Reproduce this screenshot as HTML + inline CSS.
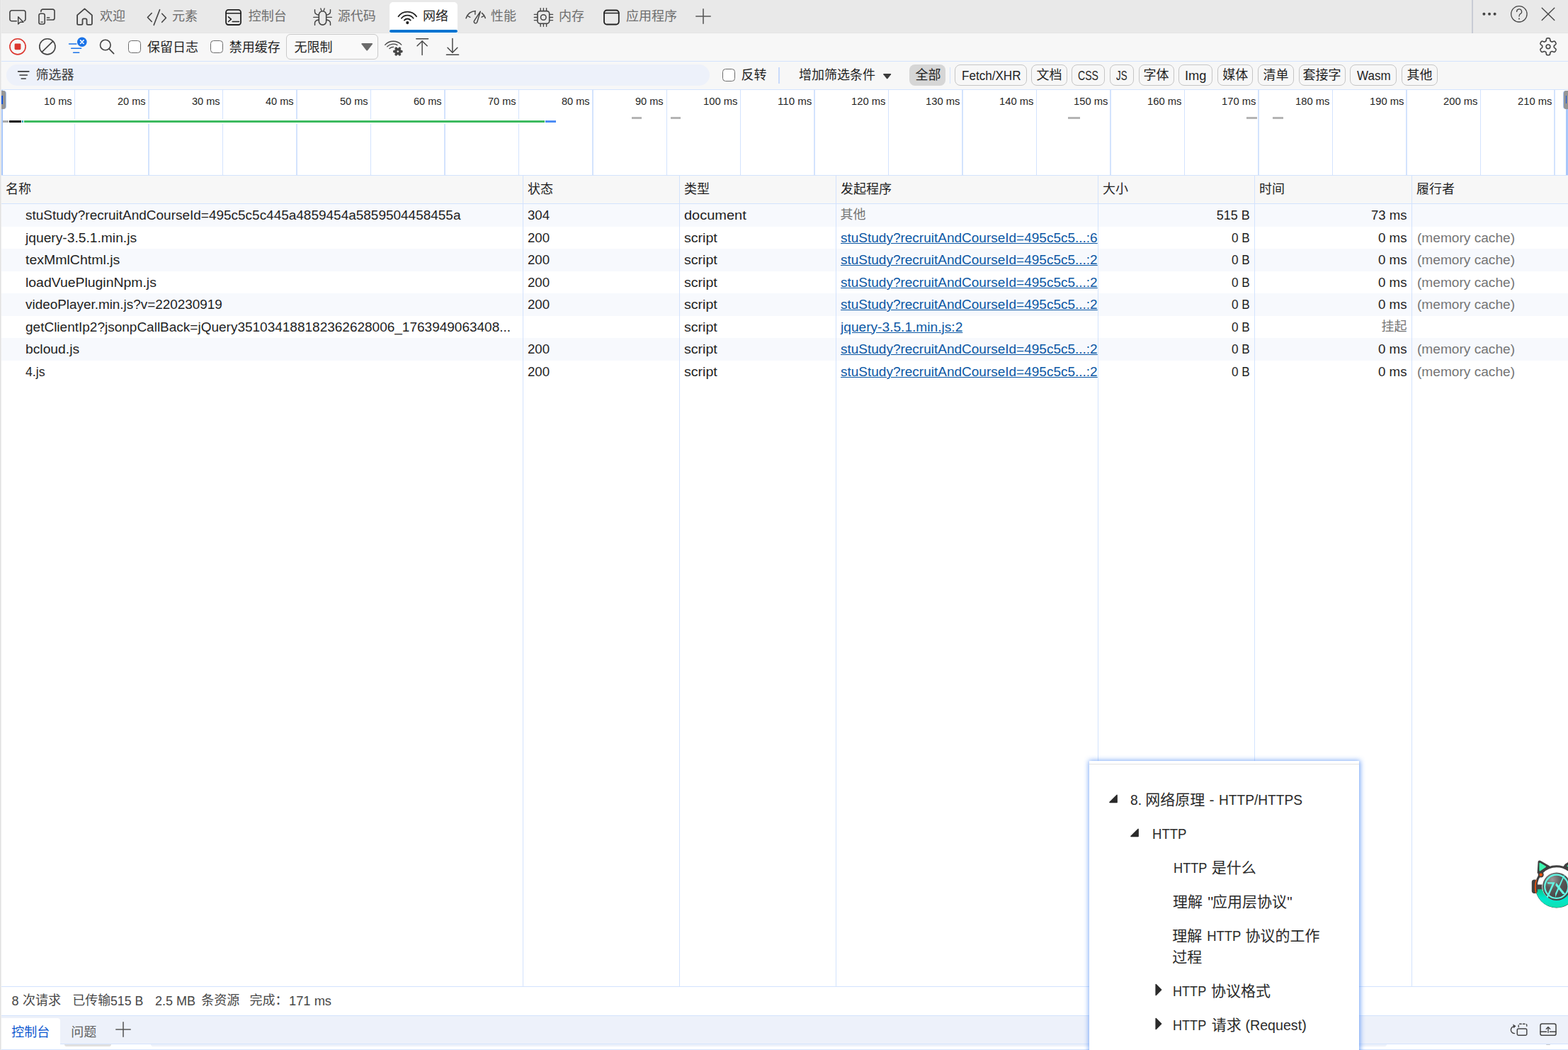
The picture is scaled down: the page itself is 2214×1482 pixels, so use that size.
<!DOCTYPE html>
<html lang="zh-CN"><head><meta charset="utf-8"><title>DevTools</title>
<style>
html,body{margin:0;padding:0;}
body{width:2214px;height:1482px;overflow:hidden;position:relative;background:#fff;font-family:"Liberation Sans","Noto Sans CJK SC",sans-serif;}
.t{position:absolute;white-space:pre;line-height:1;transform-origin:0 0;}
.g{position:absolute;overflow:visible;}
.h{position:absolute;white-space:nowrap;line-height:1;font-family:"Liberation Sans","Noto Sans CJK SC",sans-serif;}
.b{position:absolute;}
.i{position:absolute;overflow:visible;}

</style></head><body>
<div class="b" style="left:0px;top:0px;width:2214px;height:47px;background:#e9e9e9;"></div>
<div class="b" style="left:0px;top:46px;width:2214px;height:1px;background:#e5e5e5;"></div>
<div class="b" style="left:0px;top:47px;width:2214px;height:79px;background:#f7f7f7;"></div>
<div class="b" style="left:0px;top:86px;width:2214px;height:1px;background:#d3e3fd;"></div>
<div class="b" style="left:550px;top:3px;width:96px;height:44px;background:#ffffff;border-radius:5px 5px 0 0;"></div>
<div class="b" style="left:550px;top:42px;width:96px;height:4px;background:#0074d1;border-radius:2px;"></div>
<span class="h" style="left:141.00px;top:13.76px;width:36.00px;font-size:18.00px;color:#6e6e6e">欢迎</span>
<span class="h" style="left:243.00px;top:13.76px;width:36.00px;font-size:18.00px;color:#6e6e6e">元素</span>
<span class="h" style="left:350.80px;top:13.76px;width:54.00px;font-size:18.00px;color:#6e6e6e">控制台</span>
<span class="h" style="left:476.70px;top:13.76px;width:54.00px;font-size:18.00px;color:#6e6e6e">源代码</span>
<span class="h" style="left:597.00px;top:13.76px;width:36.00px;font-size:18.00px;color:#1f1f1f">网络</span>
<span class="h" style="left:693.00px;top:13.76px;width:36.00px;font-size:18.00px;color:#6e6e6e">性能</span>
<span class="h" style="left:789.00px;top:13.76px;width:36.00px;font-size:18.00px;color:#6e6e6e">内存</span>
<span class="h" style="left:884.00px;top:13.76px;width:72.00px;font-size:18.00px;color:#6e6e6e">应用程序</span>
<svg class="i" style="left:10px;top:10px;width:30px;height:28px;color:#444;" viewBox="10 10 30 28"><path d="M23.4,29.8 H16.7 A2.8,2.8 0 0 1 13.9,27 V17.6 A2.8,2.8 0 0 1 16.7,14.8 H33.2 A2.8,2.8 0 0 1 36,17.6 V27 A2.8,2.8 0 0 1 34.2,29.6" fill="none" stroke="currentColor" stroke-linecap="round" stroke-linejoin="round" stroke-width="1.62" /><path d="M25.7,23.8 V34 L28.6,31.3 L33,31.2 Z" fill="none" stroke="currentColor" stroke-linecap="round" stroke-linejoin="round" stroke-width="1.44" /></svg>
<svg class="i" style="left:50px;top:8px;width:32px;height:30px;color:#444;" viewBox="50 8 32 30"><path d="M57.9,16.6 V15.7 A2.6,2.6 0 0 1 60.5,13.1 H74.4 A2.6,2.6 0 0 1 77,15.7 V25.4 A2.6,2.6 0 0 1 74.4,28 H66.4" fill="none" stroke="currentColor" stroke-linecap="round" stroke-linejoin="round" stroke-width="1.62" /><path d="M57.2,19.2 H61 A2.2,2.2 0 0 1 63.2,21.4 V31.8 A2.2,2.2 0 0 1 61,34 H57.2 A2.2,2.2 0 0 1 55,31.8 V21.4 A2.2,2.2 0 0 1 57.2,19.2 Z" fill="none" stroke="currentColor" stroke-linecap="round" stroke-linejoin="round" stroke-width="1.62" /><path d="M57.8,31.1 H60.4" fill="none" stroke="currentColor" stroke-linecap="round" stroke-linejoin="round" stroke-width="1.35" /><path d="M66.4,25 H69.8" fill="none" stroke="currentColor" stroke-linecap="round" stroke-linejoin="round" stroke-width="1.35" /></svg>
<svg class="i" style="left:104px;top:8px;width:32px;height:30px;color:#444;" viewBox="104 8 32 30"><path d="M119.5,12.4 L109.1,21.4 V33.2 A1.6,1.6 0 0 0 110.7,34.8 H114.9 A1.6,1.6 0 0 0 116.5,33.2 V28 A1.6,1.6 0 0 1 118.1,26.4 H120.9 A1.6,1.6 0 0 1 122.5,28 V33.2 A1.6,1.6 0 0 0 124.1,34.8 H128.3 A1.6,1.6 0 0 0 129.9,33.2 V21.4 Z" fill="none" stroke="currentColor" stroke-linecap="round" stroke-linejoin="round" stroke-width="1.8" /></svg>
<svg class="i" style="left:204px;top:10px;width:36px;height:28px;color:#444;" viewBox="204 10 36 28"><path d="M214.2,18.5 L208.4,24.5 L214.2,30.5" fill="none" stroke="currentColor" stroke-linecap="round" stroke-linejoin="round" stroke-width="1.62" /><path d="M225.6,13.6 L217.2,35.4" fill="none" stroke="currentColor" stroke-linecap="round" stroke-linejoin="round" stroke-width="1.53" /><path d="M228.7,19.3 L234.4,25.2 L228.7,31.3" fill="none" stroke="currentColor" stroke-linecap="round" stroke-linejoin="round" stroke-width="1.62" /></svg>
<svg class="i" style="left:314px;top:9px;width:32px;height:30px;color:#222;" viewBox="314 9 32 30"><path d="M322.5,13.9 H336.6 A3.4,3.4 0 0 1 340,17.3 V31.6 A3.4,3.4 0 0 1 336.6,35 H322.5 A3.4,3.4 0 0 1 319.1,31.6 V17.3 A3.4,3.4 0 0 1 322.5,13.9 Z" fill="none" stroke="currentColor" stroke-linecap="round" stroke-linejoin="round" stroke-width="1.8" /><path d="M319.1,18.7 H340" fill="none" stroke="currentColor" stroke-linecap="round" stroke-linejoin="round" stroke-width="1.62" /><path d="M322.5,23.8 L326.4,27.1 L322.5,30.5" fill="none" stroke="currentColor" stroke-linecap="round" stroke-linejoin="round" stroke-width="1.53" /><path d="M328.2,30.5 H337.4" fill="none" stroke="currentColor" stroke-linecap="round" stroke-linejoin="round" stroke-width="1.53" /></svg>
<svg class="i" style="left:438px;top:8px;width:36px;height:32px;color:#444;" viewBox="438 8 36 32"><path d="M455.5,15.7 H455.5 A5.2,5.2 0 0 1 460.7,20.9 V29.9 A5.2,5.2 0 0 1 455.5,35.1 H455.5 A5.2,5.2 0 0 1 450.3,29.9 V20.9 A5.2,5.2 0 0 1 455.5,15.7 Z" fill="none" stroke="currentColor" stroke-linecap="round" stroke-linejoin="round" stroke-width="1.62" /><path d="M452.9,12 L454.1,15.6" fill="none" stroke="currentColor" stroke-linecap="round" stroke-linejoin="round" stroke-width="1.35" /><path d="M458.1,12 L456.9,15.6" fill="none" stroke="currentColor" stroke-linecap="round" stroke-linejoin="round" stroke-width="1.35" /><path d="M442.8,24.4 H450.3" fill="none" stroke="currentColor" stroke-linecap="round" stroke-linejoin="round" stroke-width="1.44" /><path d="M460.7,24.4 H468.2" fill="none" stroke="currentColor" stroke-linecap="round" stroke-linejoin="round" stroke-width="1.44" /><path d="M444.5,13.6 V16.4 Q444.6,20.3 450.2,21" fill="none" stroke="currentColor" stroke-linecap="round" stroke-linejoin="round" stroke-width="1.44" /><path d="M466.5,13.6 V16.4 Q466.4,20.3 460.8,21" fill="none" stroke="currentColor" stroke-linecap="round" stroke-linejoin="round" stroke-width="1.44" /><path d="M444.5,35.4 V32.6 Q444.6,28.7 450.2,28" fill="none" stroke="currentColor" stroke-linecap="round" stroke-linejoin="round" stroke-width="1.44" /><path d="M466.5,35.4 V32.6 Q466.4,28.7 460.8,28" fill="none" stroke="currentColor" stroke-linecap="round" stroke-linejoin="round" stroke-width="1.44" /></svg>
<svg class="i" style="left:558px;top:10px;width:36px;height:28px;color:#222;" viewBox="558 10 36 28"><circle cx="575.3" cy="32.1" r="2.1" fill="currentColor"/><path d="M562.52,23.35 A15.6,15.6 0 0 1 588.08,23.35" fill="none" stroke="currentColor" stroke-linecap="round" stroke-linejoin="round" stroke-width="1.8" /><path d="M566.95,25.77 A10.6,10.6 0 0 1 583.65,25.77" fill="none" stroke="currentColor" stroke-linecap="round" stroke-linejoin="round" stroke-width="1.8" /><path d="M570.86,28.57 A5.8,5.8 0 0 1 579.74,28.57" fill="none" stroke="currentColor" stroke-linecap="round" stroke-linejoin="round" stroke-width="1.8" /></svg>
<svg class="i" style="left:652px;top:10px;width:38px;height:28px;color:#444;" viewBox="652 10 38 28"><path d="M658.05,25.69 A14.2,14.2 0 0 1 671.20,15.41" fill="none" stroke="currentColor" stroke-linecap="round" stroke-linejoin="round" stroke-width="1.53" /><path d="M680.44,18.41 A14.2,14.2 0 0 1 685.28,25.45" fill="none" stroke="currentColor" stroke-linecap="round" stroke-linejoin="round" stroke-width="1.53" /><path d="M660.8,22.6 L663.8,24.4" fill="none" stroke="currentColor" stroke-linecap="round" stroke-linejoin="round" stroke-width="1.35" /><path d="M670.9,15.8 V20.3" fill="none" stroke="currentColor" stroke-linecap="round" stroke-linejoin="round" stroke-width="1.35" /><path d="M680,24.2 L683,22.6" fill="none" stroke="currentColor" stroke-linecap="round" stroke-linejoin="round" stroke-width="1.35" /><path d="M678.3,16.2 L669.6,29.3 A2.3,2.3 0 1 0 673.7,31.3 Z" fill="none" stroke="currentColor" stroke-linecap="round" stroke-linejoin="round" stroke-width="1.44" /></svg>
<svg class="i" style="left:750px;top:8px;width:36px;height:32px;color:#444;" viewBox="750 8 36 32"><path d="M762.6,15.6 H772.1 A3.6,3.6 0 0 1 775.7,19.2 V29.7 A3.6,3.6 0 0 1 772.1,33.3 H762.6 A3.6,3.6 0 0 1 759,29.7 V19.2 A3.6,3.6 0 0 1 762.6,15.6 Z" fill="none" stroke="currentColor" stroke-linecap="round" stroke-linejoin="round" stroke-width="1.62" /><circle cx="767.3" cy="24.5" r="3.8" fill="none" stroke="currentColor" stroke-linecap="round" stroke-linejoin="round" stroke-width="1.53"/><path d="M763.2,11.6 V14.8" fill="none" stroke="currentColor" stroke-linecap="round" stroke-linejoin="round" stroke-width="1.35" /><path d="M763.2,34.2 V37.3" fill="none" stroke="currentColor" stroke-linecap="round" stroke-linejoin="round" stroke-width="1.35" /><path d="M767.4,11.6 V14.8" fill="none" stroke="currentColor" stroke-linecap="round" stroke-linejoin="round" stroke-width="1.35" /><path d="M767.4,34.2 V37.3" fill="none" stroke="currentColor" stroke-linecap="round" stroke-linejoin="round" stroke-width="1.35" /><path d="M771.6,11.6 V14.8" fill="none" stroke="currentColor" stroke-linecap="round" stroke-linejoin="round" stroke-width="1.35" /><path d="M771.6,34.2 V37.3" fill="none" stroke="currentColor" stroke-linecap="round" stroke-linejoin="round" stroke-width="1.35" /><path d="M754.3,20.4 H758" fill="none" stroke="currentColor" stroke-linecap="round" stroke-linejoin="round" stroke-width="1.35" /><path d="M776.6,20.4 H780.6" fill="none" stroke="currentColor" stroke-linecap="round" stroke-linejoin="round" stroke-width="1.35" /><path d="M754.3,24.5 H758" fill="none" stroke="currentColor" stroke-linecap="round" stroke-linejoin="round" stroke-width="1.35" /><path d="M776.6,24.5 H780.6" fill="none" stroke="currentColor" stroke-linecap="round" stroke-linejoin="round" stroke-width="1.35" /><path d="M754.3,28.6 H758" fill="none" stroke="currentColor" stroke-linecap="round" stroke-linejoin="round" stroke-width="1.35" /><path d="M776.6,28.6 H780.6" fill="none" stroke="currentColor" stroke-linecap="round" stroke-linejoin="round" stroke-width="1.35" /></svg>
<svg class="i" style="left:848px;top:9px;width:32px;height:30px;color:#222;" viewBox="848 9 32 30"><path d="M856.8,14.5 H870 A3.8,3.8 0 0 1 873.8,18.3 V30.7 A3.8,3.8 0 0 1 870,34.5 H856.8 A3.8,3.8 0 0 1 853,30.7 V18.3 A3.8,3.8 0 0 1 856.8,14.5 Z" fill="none" stroke="currentColor" stroke-linecap="round" stroke-linejoin="round" stroke-width="1.8" /><path d="M853,18.5 H873.8" fill="none" stroke="currentColor" stroke-linecap="round" stroke-linejoin="round" stroke-width="1.62" /></svg>
<svg class="i" style="left:981px;top:10.9px;width:24px;height:24px;color:#555;" viewBox="-12 -12 24 24"><path d="M-10.2,0 H10.2 M0,-10.2 V10.2" fill="none" stroke="currentColor" stroke-linecap="round" stroke-linejoin="round" stroke-width="1.53" stroke-linecap="butt"/></svg>
<div class="b" style="left:2078.2px;top:0px;width:1.8px;height:46.8px;background:#c8ccd5;"></div>
<svg class="i" style="left:2090px;top:14px;width:26px;height:12px;color:#444;" viewBox="2090 14 26 12"><circle cx="2095.4" cy="19.8" r="2" fill="currentColor"/><circle cx="2103" cy="19.8" r="2" fill="currentColor"/><circle cx="2110.6" cy="19.8" r="2" fill="currentColor"/></svg>
<svg class="i" style="left:2130px;top:5px;width:30px;height:30px;color:#444;" viewBox="2130 5 30 30"><circle cx="2144.9" cy="19.8" r="11.2" fill="none" stroke="currentColor" stroke-linecap="round" stroke-linejoin="round" stroke-width="1.26"/><path d="M2141.6,16.4 A3.5,3.5 0 1 1 2146.6,19.6 Q2145,20.7 2145,23" fill="none" stroke="currentColor" stroke-linecap="round" stroke-linejoin="round" stroke-width="1.26" /><circle cx="2145" cy="26.4" r="1" fill="currentColor"/></svg>
<svg class="i" style="left:2172px;top:6px;width:28px;height:28px;color:#444;" viewBox="2172 6 28 28"><path d="M2177.2,11.2 L2194.8,28.5 M2194.8,11.2 L2177.2,28.5" fill="none" stroke="currentColor" stroke-linecap="round" stroke-linejoin="round" stroke-width="1.35" /></svg>
<svg class="i" style="left:10px;top:50px;width:30px;height:32px;" viewBox="10 50 30 32"><circle cx="25" cy="65.8" r="11.1" fill="none" stroke="#dc362e" stroke-width="1.6"/><rect x="20.6" y="61.4" width="8.8" height="8.8" rx="1.4" fill="#dc362e"/></svg>
<svg class="i" style="left:52px;top:50px;width:30px;height:32px;color:#444;" viewBox="52 50 30 32"><circle cx="66.9" cy="65.8" r="11.1" fill="none" stroke="currentColor" stroke-linecap="round" stroke-linejoin="round" stroke-width="1.62"/><path d="M59.3,73.4 L74.6,58.3" fill="none" stroke="currentColor" stroke-linecap="round" stroke-linejoin="round" stroke-width="1.62" /></svg>
<svg class="i" style="left:92px;top:48px;width:36px;height:34px;" viewBox="92 48 36 34"><g style="color:#1a73e8"><path d="M97.6,62 H107.8" fill="none" stroke="currentColor" stroke-linecap="round" stroke-linejoin="round" stroke-width="1.53" /><path d="M100.7,68.2 H114.6" fill="none" stroke="currentColor" stroke-linecap="round" stroke-linejoin="round" stroke-width="1.53" /><path d="M103.6,74.2 H111.7" fill="none" stroke="currentColor" stroke-linecap="round" stroke-linejoin="round" stroke-width="1.53" /></g><circle cx="115.8" cy="59.2" r="6.8" fill="#1a73e8"/><path d="M113.5,56.9 L118.1,61.5 M118.1,56.9 L113.5,61.5" stroke="#fff" stroke-width="1.5" stroke-linecap="round" fill="none"/></svg>
<svg class="i" style="left:136px;top:50px;width:30px;height:32px;color:#444;" viewBox="136 50 30 32"><circle cx="148.8" cy="63.5" r="7.3" fill="none" stroke="currentColor" stroke-linecap="round" stroke-linejoin="round" stroke-width="1.62"/><path d="M154.2,69.2 L160.6,75.6" fill="none" stroke="currentColor" stroke-linecap="round" stroke-linejoin="round" stroke-width="1.71" stroke-linecap="butt"/></svg>
<div class="b" style="left:181px;top:57px;width:18px;height:18px;background:#fff;box-sizing:border-box;border:1.8px solid #6c6c6c;border-radius:4.5px;"></div>
<span class="h" style="left:208.00px;top:57.76px;width:72.00px;font-size:18.00px;color:#1f1f1f">保留日志</span>
<div class="b" style="left:297px;top:57px;width:18px;height:18px;background:#fff;box-sizing:border-box;border:1.8px solid #6c6c6c;border-radius:4.5px;"></div>
<span class="h" style="left:323.80px;top:57.76px;width:72.00px;font-size:18.00px;color:#1f1f1f">禁用缓存</span>
<div class="b" style="left:403.5px;top:48px;width:130px;height:35.5px;background:#f9f9f9;box-sizing:border-box;border:1px solid #c9c9c9;border-radius:6px;"></div>
<span class="h" style="left:415.50px;top:57.76px;width:54.00px;font-size:18.00px;color:#1f1f1f">无限制</span>
<svg class="i" style="left:509.8px;top:60.9px;width:16.4px;height:10.6px;color:#6a6a6a;" viewBox="0 0 16.4 10.6"><path d="M1.3,0 H15.1 Q16.9,0.1 15.8,1.6 L9.2,10 Q8.2,11 7.2,10 L0.6,1.6 Q-0.5,0.1 1.3,0 Z" fill="currentColor" /></svg>
<svg class="i" style="left:540px;top:52px;width:32px;height:30px;color:#444;" viewBox="540 52 32 30"><path d="M543.67,63.36 A15.9,15.9 0 0 1 566.74,63.15" fill="none" stroke="currentColor" stroke-linecap="round" stroke-linejoin="round" stroke-width="1.35" /><path d="M546.67,65.86 A12,12 0 0 1 560.93,63.60" fill="none" stroke="currentColor" stroke-linecap="round" stroke-linejoin="round" stroke-width="1.35" /><path d="M549.98,68.50 A7.8,7.8 0 0 1 555.57,66.40" fill="none" stroke="currentColor" stroke-linecap="round" stroke-linejoin="round" stroke-width="1.35" /><path d="M565.75,74.31 L568.10,73.73 L568.10,71.47 L565.75,70.89 L565.25,70.04 L565.93,67.71 L563.97,66.58 L562.29,68.33 L561.31,68.33 L559.63,66.58 L557.67,67.71 L558.35,70.04 L557.85,70.89 L555.50,71.47 L555.50,73.73 L557.85,74.31 L558.35,75.16 L557.67,77.49 L559.63,78.62 L561.31,76.87 L562.29,76.87 L563.97,78.62 L565.93,77.49 L565.25,75.16 Z M563.5,72.6 A1.7,1.7 0 1 0 560.1,72.6 A1.7,1.7 0 1 0 563.5,72.6 Z" fill="currentColor" fill-rule="evenodd" stroke="currentColor" stroke-width="0.8" stroke-linejoin="round"/></svg>
<svg class="i" style="left:584px;top:50px;width:26px;height:32px;color:#444;" viewBox="584 50 26 32"><path d="M587.8,54.8 H604.6" fill="none" stroke="currentColor" stroke-linecap="round" stroke-linejoin="round" stroke-width="1.44" stroke-linecap="butt"/><path d="M596.1,58 V77.6" fill="none" stroke="currentColor" stroke-linecap="round" stroke-linejoin="round" stroke-width="1.44" /><path d="M589.1,64.8 L596.1,57.9 L603.2,64.8" fill="none" stroke="currentColor" stroke-linecap="round" stroke-linejoin="round" stroke-width="1.44" /></svg>
<svg class="i" style="left:626px;top:50px;width:26px;height:32px;color:#444;" viewBox="626 50 26 32"><path d="M630.4,77.3 H647.6" fill="none" stroke="currentColor" stroke-linecap="round" stroke-linejoin="round" stroke-width="1.44" stroke-linecap="butt"/><path d="M638.9,54.4 V74" fill="none" stroke="currentColor" stroke-linecap="round" stroke-linejoin="round" stroke-width="1.44" /><path d="M632,67.3 L638.9,74.2 L645.9,67.3" fill="none" stroke="currentColor" stroke-linecap="round" stroke-linejoin="round" stroke-width="1.44" /></svg>
<svg class="i" style="left:2170px;top:50px;width:32px;height:32px;color:#444;" viewBox="2170 50 32 32"><path d="M2194.30,65.80 L2194.31,65.66 L2194.31,65.51 L2194.31,65.36 L2194.31,65.22 L2194.31,65.07 L2194.33,64.92 L2194.35,64.77 L2194.40,64.62 L2194.47,64.46 L2194.59,64.29 L2194.76,64.10 L2195.01,63.89 L2195.32,63.65 L2195.68,63.39 L2196.05,63.11 L2196.39,62.82 L2196.66,62.54 L2196.86,62.27 L2196.98,62.02 L2197.04,61.78 L2197.05,61.56 L2197.03,61.34 L2196.99,61.14 L2196.92,60.94 L2196.85,60.74 L2196.77,60.55 L2196.68,60.36 L2196.59,60.17 L2196.49,59.98 L2196.39,59.80 L2196.28,59.62 L2196.17,59.44 L2196.06,59.27 L2195.93,59.10 L2195.81,58.93 L2195.67,58.77 L2195.53,58.62 L2195.37,58.48 L2195.20,58.35 L2195.00,58.25 L2194.76,58.18 L2194.49,58.16 L2194.16,58.19 L2193.78,58.29 L2193.36,58.44 L2192.93,58.62 L2192.52,58.80 L2192.16,58.96 L2191.86,59.06 L2191.61,59.12 L2191.40,59.14 L2191.22,59.12 L2191.06,59.08 L2190.92,59.03 L2190.79,58.96 L2190.66,58.90 L2190.53,58.82 L2190.40,58.75 L2190.28,58.68 L2190.15,58.61 L2190.03,58.53 L2189.90,58.46 L2189.78,58.39 L2189.65,58.31 L2189.53,58.24 L2189.41,58.15 L2189.29,58.06 L2189.18,57.94 L2189.07,57.79 L2188.98,57.61 L2188.91,57.36 L2188.85,57.04 L2188.80,56.65 L2188.75,56.21 L2188.69,55.75 L2188.62,55.31 L2188.51,54.93 L2188.37,54.63 L2188.22,54.40 L2188.04,54.23 L2187.85,54.11 L2187.66,54.02 L2187.45,53.95 L2187.25,53.91 L2187.04,53.87 L2186.84,53.85 L2186.63,53.83 L2186.42,53.81 L2186.21,53.81 L2186.00,53.80 L2185.79,53.81 L2185.58,53.81 L2185.37,53.83 L2185.16,53.85 L2184.96,53.87 L2184.75,53.91 L2184.55,53.95 L2184.34,54.02 L2184.15,54.11 L2183.96,54.23 L2183.78,54.40 L2183.63,54.63 L2183.49,54.93 L2183.38,55.31 L2183.31,55.75 L2183.25,56.21 L2183.20,56.65 L2183.15,57.04 L2183.09,57.36 L2183.02,57.61 L2182.93,57.79 L2182.82,57.94 L2182.71,58.06 L2182.59,58.15 L2182.47,58.24 L2182.35,58.31 L2182.22,58.39 L2182.10,58.46 L2181.97,58.53 L2181.85,58.61 L2181.72,58.68 L2181.60,58.75 L2181.47,58.82 L2181.34,58.90 L2181.21,58.96 L2181.08,59.03 L2180.94,59.08 L2180.78,59.12 L2180.60,59.14 L2180.39,59.12 L2180.14,59.06 L2179.84,58.96 L2179.48,58.80 L2179.07,58.62 L2178.64,58.44 L2178.22,58.29 L2177.84,58.19 L2177.51,58.16 L2177.24,58.18 L2177.00,58.25 L2176.80,58.35 L2176.63,58.48 L2176.47,58.62 L2176.33,58.77 L2176.19,58.93 L2176.07,59.10 L2175.94,59.27 L2175.83,59.44 L2175.72,59.62 L2175.61,59.80 L2175.51,59.98 L2175.41,60.17 L2175.32,60.36 L2175.23,60.55 L2175.15,60.74 L2175.08,60.94 L2175.01,61.14 L2174.97,61.34 L2174.95,61.56 L2174.96,61.78 L2175.02,62.02 L2175.14,62.27 L2175.34,62.54 L2175.61,62.82 L2175.95,63.11 L2176.32,63.39 L2176.68,63.65 L2176.99,63.89 L2177.24,64.10 L2177.41,64.29 L2177.53,64.46 L2177.60,64.62 L2177.65,64.77 L2177.67,64.92 L2177.69,65.07 L2177.69,65.22 L2177.69,65.36 L2177.69,65.51 L2177.69,65.66 L2177.70,65.80 L2177.69,65.94 L2177.69,66.09 L2177.69,66.24 L2177.69,66.38 L2177.69,66.53 L2177.67,66.68 L2177.65,66.83 L2177.60,66.98 L2177.53,67.14 L2177.41,67.31 L2177.24,67.50 L2176.99,67.71 L2176.68,67.95 L2176.32,68.21 L2175.95,68.49 L2175.61,68.78 L2175.34,69.06 L2175.14,69.33 L2175.02,69.58 L2174.96,69.82 L2174.95,70.04 L2174.97,70.26 L2175.01,70.46 L2175.08,70.66 L2175.15,70.86 L2175.23,71.05 L2175.32,71.24 L2175.41,71.43 L2175.51,71.62 L2175.61,71.80 L2175.72,71.98 L2175.83,72.16 L2175.94,72.33 L2176.07,72.50 L2176.19,72.67 L2176.33,72.83 L2176.47,72.98 L2176.63,73.12 L2176.80,73.25 L2177.00,73.35 L2177.24,73.42 L2177.51,73.44 L2177.84,73.41 L2178.22,73.31 L2178.64,73.16 L2179.07,72.98 L2179.48,72.80 L2179.84,72.64 L2180.14,72.54 L2180.39,72.48 L2180.60,72.46 L2180.78,72.48 L2180.94,72.52 L2181.08,72.57 L2181.21,72.64 L2181.34,72.70 L2181.47,72.78 L2181.60,72.85 L2181.72,72.92 L2181.85,72.99 L2181.97,73.07 L2182.10,73.14 L2182.22,73.21 L2182.35,73.29 L2182.47,73.36 L2182.59,73.45 L2182.71,73.54 L2182.82,73.66 L2182.93,73.81 L2183.02,73.99 L2183.09,74.24 L2183.15,74.56 L2183.20,74.95 L2183.25,75.39 L2183.31,75.85 L2183.38,76.29 L2183.49,76.67 L2183.63,76.97 L2183.78,77.20 L2183.96,77.37 L2184.15,77.49 L2184.34,77.58 L2184.55,77.65 L2184.75,77.69 L2184.96,77.73 L2185.16,77.75 L2185.37,77.77 L2185.58,77.79 L2185.79,77.79 L2186.00,77.80 L2186.21,77.79 L2186.42,77.79 L2186.63,77.77 L2186.84,77.75 L2187.04,77.73 L2187.25,77.69 L2187.45,77.65 L2187.66,77.58 L2187.85,77.49 L2188.04,77.37 L2188.22,77.20 L2188.37,76.97 L2188.51,76.67 L2188.62,76.29 L2188.69,75.85 L2188.75,75.39 L2188.80,74.95 L2188.85,74.56 L2188.91,74.24 L2188.98,73.99 L2189.07,73.81 L2189.18,73.66 L2189.29,73.54 L2189.41,73.45 L2189.53,73.36 L2189.65,73.29 L2189.78,73.21 L2189.90,73.14 L2190.03,73.07 L2190.15,72.99 L2190.28,72.92 L2190.40,72.85 L2190.53,72.78 L2190.66,72.70 L2190.79,72.64 L2190.92,72.57 L2191.06,72.52 L2191.22,72.48 L2191.40,72.46 L2191.61,72.48 L2191.86,72.54 L2192.16,72.64 L2192.52,72.80 L2192.93,72.98 L2193.36,73.16 L2193.78,73.31 L2194.16,73.41 L2194.49,73.44 L2194.76,73.42 L2195.00,73.35 L2195.20,73.25 L2195.37,73.12 L2195.53,72.98 L2195.67,72.83 L2195.81,72.67 L2195.93,72.50 L2196.06,72.33 L2196.17,72.16 L2196.28,71.98 L2196.39,71.80 L2196.49,71.62 L2196.59,71.43 L2196.68,71.24 L2196.77,71.05 L2196.85,70.86 L2196.92,70.66 L2196.99,70.46 L2197.03,70.26 L2197.05,70.04 L2197.04,69.82 L2196.98,69.58 L2196.86,69.33 L2196.66,69.06 L2196.39,68.78 L2196.05,68.49 L2195.68,68.21 L2195.32,67.95 L2195.01,67.71 L2194.76,67.50 L2194.59,67.31 L2194.47,67.14 L2194.40,66.98 L2194.35,66.83 L2194.33,66.68 L2194.31,66.53 L2194.31,66.38 L2194.31,66.24 L2194.31,66.09 L2194.31,65.94 Z" fill="none" stroke="currentColor" stroke-linecap="round" stroke-linejoin="round" stroke-width="1.62" /><circle cx="2186" cy="65.8" r="2.9" fill="none" stroke="currentColor" stroke-linecap="round" stroke-linejoin="round" stroke-width="1.53"/></svg>
<div class="b" style="left:9px;top:91px;width:993px;height:30px;background:#edf1fa;border-radius:15px;"></div>
<svg class="i" style="left:22px;top:97px;width:22px;height:18px;color:#3a3a3a;" viewBox="22 97 22 18"><path d="M25.6,100.9 H40.8" fill="none" stroke="currentColor" stroke-linecap="round" stroke-linejoin="round" stroke-width="1.62" /><path d="M28,106 H38.4" fill="none" stroke="currentColor" stroke-linecap="round" stroke-linejoin="round" stroke-width="1.62" /><path d="M30.2,111 H36.2" fill="none" stroke="currentColor" stroke-linecap="round" stroke-linejoin="round" stroke-width="1.62" /></svg>
<span class="h" style="left:50.40px;top:96.86px;width:54.00px;font-size:18.00px;color:#3c3c3c">筛选器</span>
<div class="b" style="left:1020px;top:97px;width:18px;height:18px;background:#fff;box-sizing:border-box;border:1.8px solid #6c6c6c;border-radius:4.5px;"></div>
<span class="h" style="left:1046.60px;top:97.26px;width:36.00px;font-size:18.00px;color:#1f1f1f">反转</span>
<div class="b" style="left:1099.2px;top:94.5px;width:1.7px;height:23px;background:#c9dbfb;"></div>
<span class="h" style="left:1128.00px;top:97.26px;width:108.00px;font-size:18.00px;color:#1f1f1f">增加筛选条件</span>
<svg class="i" style="left:1246.8px;top:103.6px;width:11.4px;height:7.6px;color:#3c3c3c;" viewBox="0 0 16.4 10.6"><path d="M1.3,0 H15.1 Q16.9,0.1 15.8,1.6 L9.2,10 Q8.2,11 7.2,10 L0.6,1.6 Q-0.5,0.1 1.3,0 Z" fill="currentColor" /></svg>
<div class="b" style="left:1284px;top:91px;width:50.7px;height:29.8px;background:#d6d6d6;border-radius:8px;"></div>
<span class="h" style="left:1292.50px;top:97.26px;width:36.00px;font-size:18.00px;color:#1f1f1f">全部</span>
<div class="b" style="left:1341px;top:94.5px;width:1px;height:23px;background:#d3e3fd;"></div>
<div class="b" style="left:1348.2px;top:91.2px;width:101.8px;height:29.6px;background:transparent;box-sizing:border-box;border:1px solid #c6c6c6;border-radius:8px;"></div>
<span class="t" style="left:1357.70px;top:97.56px;font-size:18px;color:#1f1f1f;transform:scaleX(0.9489)">Fetch/XHR</span>
<div class="b" style="left:1456px;top:91.2px;width:50.8px;height:29.6px;background:transparent;box-sizing:border-box;border:1px solid #c6c6c6;border-radius:8px;"></div>
<span class="h" style="left:1463.40px;top:97.26px;width:36.00px;font-size:18.00px;color:#1f1f1f">文档</span>
<div class="b" style="left:1513px;top:91.2px;width:47.4px;height:29.6px;background:transparent;box-sizing:border-box;border:1px solid #c6c6c6;border-radius:8px;"></div>
<span class="t" style="left:1521.80px;top:97.56px;font-size:18px;color:#1f1f1f;transform:scaleX(0.7838)">CSS</span>
<div class="b" style="left:1567.3px;top:91.2px;width:33.7px;height:29.6px;background:transparent;box-sizing:border-box;border:1px solid #c6c6c6;border-radius:8px;"></div>
<span class="t" style="left:1575.80px;top:97.56px;font-size:18px;color:#1f1f1f;transform:scaleX(0.7381)">JS</span>
<div class="b" style="left:1607.5px;top:91.2px;width:50.2px;height:29.6px;background:transparent;box-sizing:border-box;border:1px solid #c6c6c6;border-radius:8px;"></div>
<span class="h" style="left:1614.60px;top:97.26px;width:36.00px;font-size:18.00px;color:#1f1f1f">字体</span>
<div class="b" style="left:1664.3px;top:91.2px;width:48px;height:29.6px;background:transparent;box-sizing:border-box;border:1px solid #c6c6c6;border-radius:8px;"></div>
<span class="t" style="left:1673.00px;top:97.56px;font-size:18px;color:#1f1f1f;transform:scaleX(1.0133)">Img</span>
<div class="b" style="left:1719.2px;top:91.2px;width:50.2px;height:29.6px;background:transparent;box-sizing:border-box;border:1px solid #c6c6c6;border-radius:8px;"></div>
<span class="h" style="left:1726.30px;top:97.26px;width:36.00px;font-size:18.00px;color:#1f1f1f">媒体</span>
<div class="b" style="left:1776.4px;top:91.2px;width:50.2px;height:29.6px;background:transparent;box-sizing:border-box;border:1px solid #c6c6c6;border-radius:8px;"></div>
<span class="h" style="left:1783.50px;top:97.26px;width:36.00px;font-size:18.00px;color:#1f1f1f">清单</span>
<div class="b" style="left:1833.5px;top:91.2px;width:66px;height:29.6px;background:transparent;box-sizing:border-box;border:1px solid #c6c6c6;border-radius:8px;"></div>
<span class="h" style="left:1839.50px;top:97.26px;width:54.00px;font-size:18.00px;color:#1f1f1f">套接字</span>
<div class="b" style="left:1906.2px;top:91.2px;width:66.2px;height:29.6px;background:transparent;box-sizing:border-box;border:1px solid #c6c6c6;border-radius:8px;"></div>
<span class="t" style="left:1916.00px;top:97.56px;font-size:18px;color:#1f1f1f;transform:scaleX(0.9460)">Wasm</span>
<div class="b" style="left:1979.4px;top:91.2px;width:50.2px;height:29.6px;background:transparent;box-sizing:border-box;border:1px solid #c6c6c6;border-radius:8px;"></div>
<span class="h" style="left:1986.50px;top:97.26px;width:36.00px;font-size:18.00px;color:#1f1f1f">其他</span>
<div class="b" style="left:2px;top:127px;width:2212px;height:120px;background:#fff;"></div>
<div class="b" style="left:0px;top:126px;width:2214px;height:1px;background:#d3e3fd;"></div>
<div class="b" style="left:0px;top:247px;width:2214px;height:1px;background:#d3e3fd;"></div>
<div class="b" style="left:104.75px;top:127px;width:1.5px;height:120px;background:#d3e3fd;"></div>
<span class="t" style="left:61.70px;top:135.10px;font-size:15px;color:#1f1f1f;transform:scaleX(0.9707)">10 ms</span>
<div class="b" style="left:209.22px;top:127px;width:1.5px;height:120px;background:#d3e3fd;"></div>
<span class="t" style="left:166.17px;top:135.10px;font-size:15px;color:#1f1f1f;transform:scaleX(0.9707)">20 ms</span>
<div class="b" style="left:313.69px;top:127px;width:1.5px;height:120px;background:#d3e3fd;"></div>
<span class="t" style="left:270.64px;top:135.10px;font-size:15px;color:#1f1f1f;transform:scaleX(0.9707)">30 ms</span>
<div class="b" style="left:418.16px;top:127px;width:1.5px;height:120px;background:#d3e3fd;"></div>
<span class="t" style="left:375.11px;top:135.10px;font-size:15px;color:#1f1f1f;transform:scaleX(0.9707)">40 ms</span>
<div class="b" style="left:522.63px;top:127px;width:1.5px;height:120px;background:#d3e3fd;"></div>
<span class="t" style="left:479.58px;top:135.10px;font-size:15px;color:#1f1f1f;transform:scaleX(0.9707)">50 ms</span>
<div class="b" style="left:627.1px;top:127px;width:1.5px;height:120px;background:#d3e3fd;"></div>
<span class="t" style="left:584.05px;top:135.10px;font-size:15px;color:#1f1f1f;transform:scaleX(0.9707)">60 ms</span>
<div class="b" style="left:731.57px;top:127px;width:1.5px;height:120px;background:#d3e3fd;"></div>
<span class="t" style="left:688.52px;top:135.10px;font-size:15px;color:#1f1f1f;transform:scaleX(0.9707)">70 ms</span>
<div class="b" style="left:836.04px;top:127px;width:1.5px;height:120px;background:#d3e3fd;"></div>
<span class="t" style="left:792.99px;top:135.10px;font-size:15px;color:#1f1f1f;transform:scaleX(0.9707)">80 ms</span>
<div class="b" style="left:940.51px;top:127px;width:1.5px;height:120px;background:#d3e3fd;"></div>
<span class="t" style="left:897.46px;top:135.10px;font-size:15px;color:#1f1f1f;transform:scaleX(0.9707)">90 ms</span>
<div class="b" style="left:1044.98px;top:127px;width:1.5px;height:120px;background:#d3e3fd;"></div>
<span class="t" style="left:993.43px;top:135.10px;font-size:15px;color:#1f1f1f;transform:scaleX(0.9857)">100 ms</span>
<div class="b" style="left:1149.45px;top:127px;width:1.5px;height:120px;background:#d3e3fd;"></div>
<span class="t" style="left:1097.90px;top:135.10px;font-size:15px;color:#1f1f1f;transform:scaleX(1.0062)">110 ms</span>
<div class="b" style="left:1253.92px;top:127px;width:1.5px;height:120px;background:#d3e3fd;"></div>
<span class="t" style="left:1202.37px;top:135.10px;font-size:15px;color:#1f1f1f;transform:scaleX(0.9857)">120 ms</span>
<div class="b" style="left:1358.39px;top:127px;width:1.5px;height:120px;background:#d3e3fd;"></div>
<span class="t" style="left:1306.84px;top:135.10px;font-size:15px;color:#1f1f1f;transform:scaleX(0.9857)">130 ms</span>
<div class="b" style="left:1462.86px;top:127px;width:1.5px;height:120px;background:#d3e3fd;"></div>
<span class="t" style="left:1411.31px;top:135.10px;font-size:15px;color:#1f1f1f;transform:scaleX(0.9857)">140 ms</span>
<div class="b" style="left:1567.33px;top:127px;width:1.5px;height:120px;background:#d3e3fd;"></div>
<span class="t" style="left:1515.78px;top:135.10px;font-size:15px;color:#1f1f1f;transform:scaleX(0.9857)">150 ms</span>
<div class="b" style="left:1671.8px;top:127px;width:1.5px;height:120px;background:#d3e3fd;"></div>
<span class="t" style="left:1620.25px;top:135.10px;font-size:15px;color:#1f1f1f;transform:scaleX(0.9857)">160 ms</span>
<div class="b" style="left:1776.27px;top:127px;width:1.5px;height:120px;background:#d3e3fd;"></div>
<span class="t" style="left:1724.72px;top:135.10px;font-size:15px;color:#1f1f1f;transform:scaleX(0.9857)">170 ms</span>
<div class="b" style="left:1880.74px;top:127px;width:1.5px;height:120px;background:#d3e3fd;"></div>
<span class="t" style="left:1829.19px;top:135.10px;font-size:15px;color:#1f1f1f;transform:scaleX(0.9857)">180 ms</span>
<div class="b" style="left:1985.21px;top:127px;width:1.5px;height:120px;background:#d3e3fd;"></div>
<span class="t" style="left:1933.66px;top:135.10px;font-size:15px;color:#1f1f1f;transform:scaleX(0.9857)">190 ms</span>
<div class="b" style="left:2089.68px;top:127px;width:1.5px;height:120px;background:#d3e3fd;"></div>
<span class="t" style="left:2038.13px;top:135.10px;font-size:15px;color:#1f1f1f;transform:scaleX(0.9857)">200 ms</span>
<div class="b" style="left:2194.15px;top:127px;width:1.5px;height:120px;background:#d3e3fd;"></div>
<span class="t" style="left:2142.60px;top:135.10px;font-size:15px;color:#1f1f1f;transform:scaleX(0.9857)">210 ms</span>
<div class="b" style="left:2px;top:127px;width:1.8px;height:120px;background:#a8c7fa;"></div>
<div class="b" style="left:3.5px;top:167.6px;width:782px;height:7.4px;background:#fff;"></div>
<div class="b" style="left:4px;top:169.6px;width:8.3px;height:3.6px;background:#ababab;"></div>
<div class="b" style="left:13px;top:169.6px;width:17px;height:3.6px;background:#0a0a0a;"></div>
<div class="b" style="left:31px;top:169.6px;width:2.3px;height:3.6px;background:#2aa6b8;"></div>
<div class="b" style="left:34.3px;top:169.6px;width:734.7px;height:3.6px;background:#3dba5f;"></div>
<div class="b" style="left:770.3px;top:169.6px;width:14.3px;height:3.6px;background:#4d8df5;"></div>
<div class="b" style="left:892.4px;top:164.8px;width:14.1px;height:3.4px;background:#b4b4b4;"></div>
<div class="b" style="left:946.6px;top:164.8px;width:14.9px;height:3.4px;background:#b4b4b4;"></div>
<div class="b" style="left:1507.7px;top:164.8px;width:17.3px;height:3.4px;background:#b4b4b4;"></div>
<div class="b" style="left:1760.3px;top:164.8px;width:14.5px;height:3.4px;background:#b4b4b4;"></div>
<div class="b" style="left:1796.6px;top:164.8px;width:15.4px;height:3.4px;background:#b4b4b4;"></div>
<div class="b" style="left:2px;top:127.6px;width:6.8px;height:26.8px;background:#a8c7fa;border-radius:0 4px 4px 0;"></div>
<div class="b" style="left:2px;top:128.3px;width:6px;height:25.4px;background:#969696;border-radius:0 3.4px 3.4px 0;"></div>
<div class="b" style="left:2px;top:135px;width:2.3px;height:11.5px;background:#1553d8;"></div>
<div class="b" style="left:2210.8px;top:154px;width:3.2px;height:93px;background:#a8c7fa;"></div>
<div class="b" style="left:2207.2px;top:127.6px;width:6.8px;height:26.8px;background:#a8c7fa;border-radius:4px 0 0 4px;"></div>
<div class="b" style="left:2208px;top:128.3px;width:6px;height:25.4px;background:#969696;border-radius:3.4px 0 0 3.4px;"></div>
<div class="b" style="left:2210.8px;top:135px;width:1.3px;height:11px;background:#1553d8;"></div>
<div class="b" style="left:2px;top:248px;width:2212px;height:39px;background:#f7f7f7;"></div>
<div class="b" style="left:0px;top:287px;width:2214px;height:1px;background:#d3e3fd;"></div>
<div class="b" style="left:2px;top:288px;width:2212px;height:31.5px;background:#f7f9fd;"></div>
<div class="b" style="left:2px;top:351px;width:2212px;height:31.5px;background:#f7f9fd;"></div>
<div class="b" style="left:2px;top:414px;width:2212px;height:31.5px;background:#f7f9fd;"></div>
<div class="b" style="left:2px;top:477px;width:2212px;height:31.5px;background:#f7f9fd;"></div>
<div class="b" style="left:738px;top:248px;width:1px;height:1144px;background:#d3e3fd;"></div>
<div class="b" style="left:959px;top:248px;width:1px;height:1144px;background:#d3e3fd;"></div>
<div class="b" style="left:1180px;top:248px;width:1px;height:1144px;background:#d3e3fd;"></div>
<div class="b" style="left:1550px;top:248px;width:1px;height:1144px;background:#d3e3fd;"></div>
<div class="b" style="left:1771px;top:248px;width:1px;height:1144px;background:#d3e3fd;"></div>
<div class="b" style="left:1993px;top:248px;width:1px;height:1144px;background:#d3e3fd;"></div>
<span class="h" style="left:8.00px;top:258.06px;width:36.00px;font-size:18.00px;color:#1f1f1f">名称</span>
<span class="h" style="left:745.00px;top:258.06px;width:36.00px;font-size:18.00px;color:#1f1f1f">状态</span>
<span class="h" style="left:966.00px;top:258.06px;width:36.00px;font-size:18.00px;color:#1f1f1f">类型</span>
<span class="h" style="left:1187.00px;top:258.06px;width:72.00px;font-size:18.00px;color:#1f1f1f">发起程序</span>
<span class="h" style="left:1557.00px;top:258.06px;width:36.00px;font-size:18.00px;color:#1f1f1f">大小</span>
<span class="h" style="left:1778.00px;top:258.06px;width:36.00px;font-size:18.00px;color:#1f1f1f">时间</span>
<span class="h" style="left:2000.00px;top:258.06px;width:54.00px;font-size:18.00px;color:#1f1f1f">履行者</span>
<span class="t" style="left:36.00px;top:295.06px;font-size:18px;color:#1f1f1f;transform:scaleX(1.0540)">stuStudy?recruitAndCourseId=495c5c5c445a4859454a5859504458455a</span>
<span class="t" style="left:745.00px;top:295.06px;font-size:18px;color:#1f1f1f;transform:scaleX(1.0333)">304</span>
<span class="t" style="left:966.00px;top:295.06px;font-size:18px;color:#1f1f1f;transform:scaleX(1.1101)">document</span>
<span class="h" style="left:1186.60px;top:293.86px;width:36.00px;font-size:18.00px;color:#757575">其他</span>
<span class="t" style="left:1717.70px;top:295.06px;font-size:18px;color:#1f1f1f">515 B</span>
<span class="t" style="left:1935.70px;top:295.06px;font-size:18px;color:#1f1f1f;transform:scaleX(1.0306)">73 ms</span>
<span class="t" style="left:36.00px;top:326.56px;font-size:18px;color:#1f1f1f;transform:scaleX(1.0680)">jquery-3.5.1.min.js</span>
<span class="t" style="left:745.00px;top:326.56px;font-size:18px;color:#1f1f1f;transform:scaleX(1.0333)">200</span>
<span class="t" style="left:966.00px;top:326.56px;font-size:18px;color:#1f1f1f;transform:scaleX(1.0884)">script</span>
<span class="t" style="left:1187.00px;top:326.56px;font-size:18px;color:#0b57a4;transform:scaleX(1.0552);text-decoration:underline">stuStudy?recruitAndCourseId=495c5c5...:6</span>
<span class="t" style="left:1739.00px;top:326.56px;font-size:18px;color:#1f1f1f;transform:scaleX(0.9519)">0 B</span>
<span class="t" style="left:1945.70px;top:326.56px;font-size:18px;color:#1f1f1f;transform:scaleX(1.0385)">0 ms</span>
<span class="t" style="left:2000.50px;top:326.56px;font-size:18px;color:#757575;transform:scaleX(1.0615)">(memory cache)</span>
<span class="t" style="left:36.00px;top:358.06px;font-size:18px;color:#1f1f1f;transform:scaleX(1.0837)">texMmlChtml.js</span>
<span class="t" style="left:745.00px;top:358.06px;font-size:18px;color:#1f1f1f;transform:scaleX(1.0333)">200</span>
<span class="t" style="left:966.00px;top:358.06px;font-size:18px;color:#1f1f1f;transform:scaleX(1.0884)">script</span>
<span class="t" style="left:1187.00px;top:358.06px;font-size:18px;color:#0b57a4;transform:scaleX(1.0552);text-decoration:underline">stuStudy?recruitAndCourseId=495c5c5...:2</span>
<span class="t" style="left:1739.00px;top:358.06px;font-size:18px;color:#1f1f1f;transform:scaleX(0.9519)">0 B</span>
<span class="t" style="left:1945.70px;top:358.06px;font-size:18px;color:#1f1f1f;transform:scaleX(1.0385)">0 ms</span>
<span class="t" style="left:2000.50px;top:358.06px;font-size:18px;color:#757575;transform:scaleX(1.0615)">(memory cache)</span>
<span class="t" style="left:36.00px;top:389.56px;font-size:18px;color:#1f1f1f;transform:scaleX(1.0784)">loadVuePluginNpm.js</span>
<span class="t" style="left:745.00px;top:389.56px;font-size:18px;color:#1f1f1f;transform:scaleX(1.0333)">200</span>
<span class="t" style="left:966.00px;top:389.56px;font-size:18px;color:#1f1f1f;transform:scaleX(1.0884)">script</span>
<span class="t" style="left:1187.00px;top:389.56px;font-size:18px;color:#0b57a4;transform:scaleX(1.0552);text-decoration:underline">stuStudy?recruitAndCourseId=495c5c5...:2</span>
<span class="t" style="left:1739.00px;top:389.56px;font-size:18px;color:#1f1f1f;transform:scaleX(0.9519)">0 B</span>
<span class="t" style="left:1945.70px;top:389.56px;font-size:18px;color:#1f1f1f;transform:scaleX(1.0385)">0 ms</span>
<span class="t" style="left:2000.50px;top:389.56px;font-size:18px;color:#757575;transform:scaleX(1.0615)">(memory cache)</span>
<span class="t" style="left:36.00px;top:421.06px;font-size:18px;color:#1f1f1f;transform:scaleX(1.0494)">videoPlayer.min.js?v=220230919</span>
<span class="t" style="left:745.00px;top:421.06px;font-size:18px;color:#1f1f1f;transform:scaleX(1.0333)">200</span>
<span class="t" style="left:966.00px;top:421.06px;font-size:18px;color:#1f1f1f;transform:scaleX(1.0884)">script</span>
<span class="t" style="left:1187.00px;top:421.06px;font-size:18px;color:#0b57a4;transform:scaleX(1.0552);text-decoration:underline">stuStudy?recruitAndCourseId=495c5c5...:2</span>
<span class="t" style="left:1739.00px;top:421.06px;font-size:18px;color:#1f1f1f;transform:scaleX(0.9519)">0 B</span>
<span class="t" style="left:1945.70px;top:421.06px;font-size:18px;color:#1f1f1f;transform:scaleX(1.0385)">0 ms</span>
<span class="t" style="left:2000.50px;top:421.06px;font-size:18px;color:#757575;transform:scaleX(1.0615)">(memory cache)</span>
<span class="t" style="left:36.00px;top:452.56px;font-size:18px;color:#1f1f1f;transform:scaleX(1.0555)">getClientIp2?jsonpCallBack=jQuery351034188182362628006_1763949063408...</span>
<span class="t" style="left:966.00px;top:452.56px;font-size:18px;color:#1f1f1f;transform:scaleX(1.0884)">script</span>
<span class="t" style="left:1187.00px;top:452.56px;font-size:18px;color:#0b57a4;transform:scaleX(1.0630);text-decoration:underline">jquery-3.5.1.min.js:2</span>
<span class="t" style="left:1739.00px;top:452.56px;font-size:18px;color:#1f1f1f;transform:scaleX(0.9519)">0 B</span>
<span class="h" style="left:1950.60px;top:452.16px;width:36.00px;font-size:18.00px;color:#757575">挂起</span>
<span class="t" style="left:36.00px;top:484.06px;font-size:18px;color:#1f1f1f;transform:scaleX(1.0704)">bcloud.js</span>
<span class="t" style="left:745.00px;top:484.06px;font-size:18px;color:#1f1f1f;transform:scaleX(1.0333)">200</span>
<span class="t" style="left:966.00px;top:484.06px;font-size:18px;color:#1f1f1f;transform:scaleX(1.0884)">script</span>
<span class="t" style="left:1187.00px;top:484.06px;font-size:18px;color:#0b57a4;transform:scaleX(1.0552);text-decoration:underline">stuStudy?recruitAndCourseId=495c5c5...:2</span>
<span class="t" style="left:1739.00px;top:484.06px;font-size:18px;color:#1f1f1f;transform:scaleX(0.9519)">0 B</span>
<span class="t" style="left:1945.70px;top:484.06px;font-size:18px;color:#1f1f1f;transform:scaleX(1.0385)">0 ms</span>
<span class="t" style="left:2000.50px;top:484.06px;font-size:18px;color:#757575;transform:scaleX(1.0615)">(memory cache)</span>
<span class="t" style="left:36.00px;top:515.56px;font-size:18px;color:#1f1f1f;transform:scaleX(0.9821)">4.js</span>
<span class="t" style="left:745.00px;top:515.56px;font-size:18px;color:#1f1f1f;transform:scaleX(1.0333)">200</span>
<span class="t" style="left:966.00px;top:515.56px;font-size:18px;color:#1f1f1f;transform:scaleX(1.0884)">script</span>
<span class="t" style="left:1187.00px;top:515.56px;font-size:18px;color:#0b57a4;transform:scaleX(1.0552);text-decoration:underline">stuStudy?recruitAndCourseId=495c5c5...:2</span>
<span class="t" style="left:1739.00px;top:515.56px;font-size:18px;color:#1f1f1f;transform:scaleX(0.9519)">0 B</span>
<span class="t" style="left:1945.70px;top:515.56px;font-size:18px;color:#1f1f1f;transform:scaleX(1.0385)">0 ms</span>
<span class="t" style="left:2000.50px;top:515.56px;font-size:18px;color:#757575;transform:scaleX(1.0615)">(memory cache)</span>
<div class="b" style="left:0px;top:1392px;width:2214px;height:1px;background:#d3e3fd;"></div>
<span class="t" style="left:16.50px;top:1403.66px;font-size:18px;color:#474747">8 </span>
<span class="h" style="left:32.00px;top:1403.46px;width:54.00px;font-size:18.00px;color:#474747">次请求</span>
<span class="h" style="left:102.30px;top:1403.46px;width:54.00px;font-size:18.00px;color:#474747">已传输</span>
<span class="t" style="left:156.20px;top:1403.66px;font-size:18px;color:#474747;transform:scaleX(0.9851)">515 B</span>
<span class="t" style="left:219.00px;top:1403.66px;font-size:18px;color:#474747">2.5 MB </span>
<span class="h" style="left:284.20px;top:1403.46px;width:54.00px;font-size:18.00px;color:#474747">条资源</span>
<span class="h" style="left:352.60px;top:1403.46px;width:54.00px;font-size:18.00px;color:#474747">完成：</span>
<span class="t" style="left:407.50px;top:1403.66px;font-size:18px;color:#474747;transform:scaleX(1.0169)">171 ms</span>
<div class="b" style="left:2px;top:1434px;width:2212px;height:39px;background:#edf1fa;"></div>
<div class="b" style="left:0px;top:1433px;width:2214px;height:1px;background:#d3e3fd;"></div>
<div class="b" style="left:85px;top:1473px;width:2129px;height:1px;background:#d3e3fd;"></div>
<div class="b" style="left:2px;top:1474px;width:2212px;height:7px;background:#ffffff;"></div>
<div class="b" style="left:0px;top:1481px;width:2214px;height:1px;background:#d3e3fd;"></div>
<div class="b" style="left:91px;top:1474px;width:66px;height:3.2px;background:#e0e0e0;border-radius:0 0 3px 3px;"></div>
<div class="b" style="left:213px;top:1474px;width:1745px;height:3px;background:#edf1fa;border-radius:0 0 5px 5px;"></div>
<div class="b" style="left:2183px;top:1474px;width:5.5px;height:1.2px;background:#c9c9c9;border-radius:0 0 2px 2px;"></div>
<div class="b" style="left:2px;top:1437px;width:83px;height:37px;background:#fff;border-radius:0 4px 0 0;"></div>
<span class="h" style="left:16.30px;top:1447.76px;width:54.00px;font-size:18.00px;color:#0b57d0">控制台</span>
<span class="h" style="left:100.30px;top:1447.76px;width:36.00px;font-size:18.00px;color:#5e5e5e">问题</span>
<svg class="i" style="left:162px;top:1441.2px;width:24px;height:24px;color:#555;" viewBox="-12 -12 24 24"><path d="M-10.2,0 H10.2 M0,-10.2 V10.2" fill="none" stroke="currentColor" stroke-linecap="round" stroke-linejoin="round" stroke-width="1.53" stroke-linecap="butt"/></svg>
<svg class="i" style="left:2128px;top:1440px;width:32px;height:26px;color:#444;" viewBox="2128 1440 32 26"><path d="M2144.1,1452 H2154 A1.8,1.8 0 0 1 2155.8,1453.8 V1459.4 A1.8,1.8 0 0 1 2154,1461.2 H2144.1 A1.8,1.8 0 0 1 2142.3,1459.4 V1453.8 A1.8,1.8 0 0 1 2144.1,1452 Z" fill="none" stroke="currentColor" stroke-linecap="round" stroke-linejoin="round" stroke-width="1.44" /><path d="M2144.2,1449.6 V1447 A1.8,1.8 0 0 1 2146,1445.2 H2154 A1.8,1.8 0 0 1 2155.8,1447 V1449.6" fill="none" stroke="currentColor" stroke-linecap="round" stroke-linejoin="round" stroke-width="1.35" stroke-dasharray="2.6 2.2"/><path d="M2138.6,1458.6 A5,5 0 0 1 2138.2,1448.6" fill="none" stroke="currentColor" stroke-linecap="round" stroke-linejoin="round" stroke-width="1.44" /><path d="M2136.3,1445.6 L2140.6,1448.2 L2137.2,1451.3 Z" fill="currentColor" /></svg>
<svg class="i" style="left:2170px;top:1440px;width:32px;height:26px;color:#444;" viewBox="2170 1440 32 26"><path d="M2177.4,1445 H2194.6 A2.4,2.4 0 0 1 2197,1447.4 V1458.9 A2.4,2.4 0 0 1 2194.6,1461.3 H2177.4 A2.4,2.4 0 0 1 2175,1458.9 V1447.4 A2.4,2.4 0 0 1 2177.4,1445 Z" fill="none" stroke="currentColor" stroke-linecap="round" stroke-linejoin="round" stroke-width="1.53" /><path d="M2175,1456.2 H2183.6 M2188.4,1456.2 H2197" fill="none" stroke="currentColor" stroke-linecap="round" stroke-linejoin="round" stroke-width="1.35" /><path d="M2186,1457.4 V1449.8 M2183.3,1452.3 L2186,1449.6 L2188.7,1452.3" fill="none" stroke="currentColor" stroke-linecap="round" stroke-linejoin="round" stroke-width="1.35" /></svg>
<svg class="i" style="left:2154px;top:1206px;width:60px;height:84px" viewBox="2154 1206 60 84">
<defs>
<radialGradient id="mg1" cx="0.35" cy="0.25" r="0.9"><stop offset="0" stop-color="#9a9a9a"/><stop offset="0.35" stop-color="#5a5a5a"/><stop offset="1" stop-color="#3a3a3a"/></radialGradient>
<linearGradient id="mg2" x1="0" y1="0" x2="0" y2="1"><stop offset="0" stop-color="#06c790"/><stop offset="0.5" stop-color="#00e8cf"/><stop offset="1" stop-color="#0fe0b0"/></linearGradient>
</defs>
<path d="M2170.6,1232.5 L2171.6,1216.5 Q2172,1213.6 2175,1214.8 L2188.5,1222.6 L2181,1236 Z" fill="#3f3f3f"/>
<path d="M2214,1217 L2210,1219.5 L2207,1223.5 L2214,1226 Z" fill="#3f3f3f"/>
<path d="M2214,1220.5 L2212.3,1222.8 L2214,1223.6 Z" fill="#3df5b0"/>
<circle cx="2197.8" cy="1251.3" r="28.6" fill="#fff" stroke="#3f3f3f" stroke-width="3"/>
<path d="M2168.6,1255.2 A29.5,29.5 0 0 0 2214,1275.9 L2214,1255.2 Z" fill="url(#mg2)"/>
<path d="M2168.3,1255.6 H2182 V1248.4 H2168.6 Z" fill="#444"/>
<circle cx="2197.8" cy="1251.3" r="20.6" fill="#fff"/>
<path d="M2168.4,1255.4 A29.5,29.5 0 0 0 2214,1275.9 V1262 A20.4,20.4 0 0 1 2177.6,1255.4 Z" fill="url(#mg2)"/>
<circle cx="2197.8" cy="1251.3" r="19.8" fill="url(#mg1)"/>
<circle cx="2197.8" cy="1251.3" r="16.6" fill="none" stroke="#62f7e4" stroke-width="2.3"/>
<path d="M2184.6,1245.2 H2195.6 L2185.8,1267 L2183.6,1266 L2191.8,1247.6 H2185.4 Z" fill="#62f7e4"/>
<path d="M2209.8,1234.5 L2196.2,1266.5 L2196,1261 L2207.3,1236.5 Z" fill="#62f7e4"/>
<path d="M2197.5,1246 L2210.5,1262 H2206.5 L2196.3,1249.5 Z" fill="#62f7e4"/>
<path d="M2173.4,1218.6 Q2174,1217.4 2175.2,1218 L2182.6,1222.4 Q2183.6,1223.1 2182.6,1223.9 L2175,1229.3 Q2173.6,1230 2173.5,1228.6 Z" fill="#3df5b0"/>
<circle cx="2175.7" cy="1234.6" r="4" fill="#3f3f3f"/>
<circle cx="2175.7" cy="1234.6" r="2.2" fill="#f4510b"/>
<rect x="2162.8" y="1241.5" width="8.2" height="19.4" rx="3.6" fill="#424242"/>
<path d="M2168.6,1241.8 Q2165.6,1251 2168,1260.6 L2169.6,1260.6 Q2167.6,1251 2170,1241.8 Z" fill="#f4510b"/>
</svg>
<div class="b" style="left:1538px;top:1074px;width:380.6px;height:420px;background:#fff;box-shadow:0 0 7px 1.5px rgba(75,137,245,0.8);"></div>
<div class="b" style="left:1538px;top:1078px;width:380.6px;height:1px;background:#e2e2e2;"></div>
<svg class="i" style="left:1565.7px;top:1119.5px;width:14px;height:14px" viewBox="0 0 14 14"><path d="M1.0,12.4 L11.1,2.3 V12.4 Z" fill="#2b2b2b" stroke="#2b2b2b" stroke-width="1.5" stroke-linejoin="round"/></svg>
<span class="t" style="left:1596.30px;top:1117.82px;font-size:21px;color:#2a2a2a;transform:scaleX(0.9167)">8. </span>
<span class="h" style="left:1617.30px;top:1118.12px;width:84.00px;font-size:21.00px;color:#2a2a2a">网络原理</span>
<span class="t" style="left:1707.40px;top:1117.82px;font-size:21px;color:#2a2a2a">-</span>
<span class="t" style="left:1720.80px;top:1117.82px;font-size:21px;color:#2a2a2a;transform:scaleX(0.9115)">HTTP/HTTPS</span>
<svg class="i" style="left:1595.6px;top:1167.5px;width:14px;height:14px" viewBox="0 0 14 14"><path d="M1.0,12.4 L11.1,2.3 V12.4 Z" fill="#2b2b2b" stroke="#2b2b2b" stroke-width="1.5" stroke-linejoin="round"/></svg>
<span class="t" style="left:1626.80px;top:1165.82px;font-size:21px;color:#2a2a2a;transform:scaleX(0.8836)">HTTP</span>
<span class="t" style="left:1656.70px;top:1213.82px;font-size:21px;color:#2a2a2a;transform:scaleX(0.8656)">HTTP </span>
<span class="h" style="left:1710.80px;top:1214.12px;width:63.00px;font-size:21.00px;color:#2a2a2a">是什么</span>
<span class="h" style="left:1656.00px;top:1262.12px;width:42.00px;font-size:21.00px;color:#2a2a2a">理解</span>
<span class="t" style="left:1699.20px;top:1261.82px;font-size:21px;color:#2a2a2a;transform:scaleX(1.0769)"> &quot;</span>
<span class="h" style="left:1712.10px;top:1262.12px;width:105.00px;font-size:21.00px;color:#2a2a2a">应用层协议</span>
<span class="t" style="left:1817.30px;top:1261.82px;font-size:21px;color:#2a2a2a">&quot;</span>
<span class="h" style="left:1655.30px;top:1310.12px;width:42.00px;font-size:21.00px;color:#2a2a2a">理解</span>
<span class="t" style="left:1699.30px;top:1309.82px;font-size:21px;color:#2a2a2a;transform:scaleX(0.8806)"> HTTP </span>
<span class="h" style="left:1758.40px;top:1310.12px;width:105.00px;font-size:21.00px;color:#2a2a2a">协议的工作</span>
<span class="h" style="left:1655.30px;top:1340.12px;width:42.00px;font-size:21.00px;color:#2a2a2a">过程</span>
<svg class="i" style="left:1630.9px;top:1387.8px;width:12px;height:18px" viewBox="0 0 12 18"><path d="M1.2,1.6 L8.6,9 L1.2,16.4 Z" fill="#2b2b2b" stroke="#2b2b2b" stroke-width="1.6" stroke-linejoin="round"/></svg>
<span class="t" style="left:1656.20px;top:1387.82px;font-size:21px;color:#2a2a2a;transform:scaleX(0.8607)">HTTP </span>
<span class="h" style="left:1710.10px;top:1388.12px;width:84.00px;font-size:21.00px;color:#2a2a2a">协议格式</span>
<svg class="i" style="left:1630.9px;top:1435.8px;width:12px;height:18px" viewBox="0 0 12 18"><path d="M1.2,1.6 L8.6,9 L1.2,16.4 Z" fill="#2b2b2b" stroke="#2b2b2b" stroke-width="1.6" stroke-linejoin="round"/></svg>
<span class="t" style="left:1656.20px;top:1435.82px;font-size:21px;color:#2a2a2a;transform:scaleX(0.8607)">HTTP </span>
<span class="h" style="left:1710.70px;top:1436.12px;width:42.00px;font-size:21.00px;color:#2a2a2a">请求</span>
<span class="t" style="left:1752.80px;top:1435.82px;font-size:21px;color:#2a2a2a;transform:scaleX(0.9350)"> (Request)</span>
<div class="b" style="left:0px;top:0px;width:2.2px;height:1482px;background:linear-gradient(90deg,#dcdcdc,#f2f2f2);"></div>
</body></html>
